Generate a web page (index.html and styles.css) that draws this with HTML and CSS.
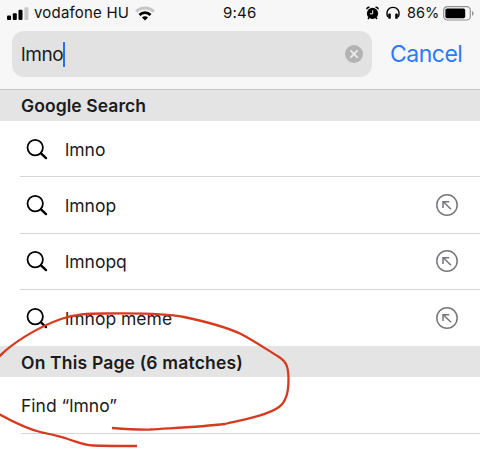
FILE: index.html
```html
<!DOCTYPE html>
<html lang="en">
<head>
  <meta charset="UTF-8">
  <title>Search</title>
  <link rel="stylesheet" href="styles.css">
</head>
<body>
  <svg class="defs" width="0" height="0">
    <symbol id="search" viewBox="0 0 24 24">
      <circle cx="10.2" cy="10.6" r="7.7" fill="none" stroke="#000" stroke-width="1.8"/>
      <path d="M16 16.400l5 4.700" stroke="#000" stroke-width="2.400" stroke-linecap="round"/>
    </symbol>
    <symbol id="fill" viewBox="0 0 24 24">
      <g fill="none" stroke="#77777a" stroke-width="1.500">
        <circle cx="12" cy="12" r="10.200"/>
        <path d="M16 16.200L8.300 8.800M8 15V8.700h6.300"/>
      </g>
    </symbol>
  </svg>

  <div class="phone">
    <header class="top">
      <div class="status">
        <svg class="signal" width="22" height="13">
          <rect x="0" y="8.6" width="4" height="4.4" rx="1"/>
          <rect x="5.8" y="6.3" width="4" height="6.7" rx="1"/>
          <rect x="11.5" y="2.8" width="4" height="10.2" rx="1"/>
          <rect x="17.4" y="0.2" width="4" height="12.8" rx="1" fill="#c8c8c8"/>
        </svg>
        <span class="carrier">vodafone HU</span>
        <svg class="wifi" width="20" height="15" viewBox="0 0 20 15">
          <path d="M1.2 5.6a12.4 12.4 0 0 1 17.6 0" fill="none" stroke="#c6c6c6" stroke-width="3"/>
          <path d="M4.5 8.9a7.8 7.8 0 0 1 11 0" fill="none" stroke="#000" stroke-width="2.8"/>
          <path d="M10 14.6l-3-3a4.2 4.2 0 0 1 6 0z"/>
        </svg>
        <span class="time">9:46</span>
        <svg class="alarm" width="13" height="14" viewBox="0 0 13 14">
          <circle cx="6.5" cy="7.4" r="5.6"/>
          <path d="M2 12.9l1.6-1.8M11 12.9l-1.6-1.8" stroke="#000" stroke-width="1.5"/>
          <path d="M.5 3.8A2.4 2.4 0 0 1 4.2 1zM12.5 3.8A2.4 2.4 0 0 0 8.8 1z"/>
          <path d="M6.7 4.4v3.4H3.8" fill="none" stroke="#f7f7f7" stroke-width="1"/>
        </svg>
        <svg class="headphones" width="14" height="14" viewBox="0 0 14 14">
          <path d="M1.8 11C-.6 5.3 2.5 1.4 7 1.4s7.6 3.9 5.2 9.600" fill="none" stroke="#000" stroke-width="1.4"/>
          <rect x="2.2" y="7.5" width="2.6" height="5.3" rx=".9"/>
          <rect x="9.2" y="7.5" width="2.6" height="5.3" rx=".9"/>
        </svg>
        <span class="percent">86%</span>
        <svg class="battery" width="31" height="15" viewBox="0 0 31 15">
          <rect x=".7" y=".7" width="26.6" height="13.3" rx="3.6" fill="none" stroke="#929292" stroke-width="1.2"/>
          <rect x="2.4" y="2.4" width="19.8" height="9.9" rx="1.7"/>
          <path d="M29 5a2.6 2.6 0 0 1 0 4.8z" fill="#929292"/>
        </svg>
      </div>
      <div class="bar">
        <div class="field">
          <span class="query">lmno</span><span class="caret"></span>
          <svg class="clear" width="18" height="18" viewBox="0 0 18 18">
            <circle cx="9" cy="9" r="9" fill="#b3b3b4"/>
            <path d="M5.4 5.4l7.2 7.2M12.6 5.4l-7.2 7.2" stroke="#eee" stroke-width="1.6"/>
          </svg>
        </div>
        <span class="cancel">Cancel</span>
      </div>
    </header>

    <h2 class="section"><span>Google Search</span></h2>
    <ul class="results">
      <li class="row"><svg class="glass"><use href="#search"/></svg><span class="word">lmno</span></li>
      <li class="row"><svg class="glass"><use href="#search"/></svg><span class="word">lmnop</span><svg class="arrow"><use href="#fill"/></svg></li>
      <li class="row"><svg class="glass"><use href="#search"/></svg><span class="word">lmnopq</span><svg class="arrow"><use href="#fill"/></svg></li>
      <li class="row last"><svg class="glass"><use href="#search"/></svg><span class="word">lmnop meme</span><svg class="arrow"><use href="#fill"/></svg></li>
    </ul>

    <h2 class="section page"><span>On This Page (6 matches)</span></h2>
    <ul class="results">
      <li class="row find"><span>Find “lmno”</span></li>
    </ul>

    <!-- hand-drawn loop around the page matches -->
    <svg class="marker" width="480" height="455" viewBox="0 0 480 455">
      <path d="M-3 359C10 344 38 327 61 319C75 314 88 313.500 105 313.500C135 313 164 313 184 317C203 321 226 327 241 334C256 342 266 349 279 357C287 362 288.500 368 288.500 380C288.500 393 286 402 279 407C268 415 246 419 225 424C200 427 172 428 150 429.500C138 430 125 429 112 428"/>
      <path d="M-3 413C13 422 31 430 42 432.500C52 434.500 60 436 68 439C80 443 84 445 93 445.500C106 446 120 446 137 446"/>
    </svg>
  </div>
</body>
</html>
```
FILE: styles.css
```css
* { box-sizing: border-box; }
body {
  margin: 0;
  background: #fff;
  color: #1b1b1d;
  font-family: Inter, "Liberation Sans", sans-serif;
}
.defs { position: absolute; }
.phone {
  position: relative;
  height: 455px;
  overflow: hidden;
}
.top {
  height: 90px;
  background: #f7f7f7;
  border-bottom: 1px solid #c4c4c4;
}

.status {
  display: flex;
  align-items: center;
  height: 26px;
  padding-left: 7px;
  color: #111;
  font-size: 14.5px;
  line-height: 26px;
  white-space: nowrap;
}
.status svg { flex: none; }
.signal { margin-right: 5px; }
.carrier {
  width: 95px;
  font-size: 15px;
  letter-spacing: 0.2px;
}
.wifi { margin-left: 6px; }
.time {
  width: 35px;
  margin-left: 68px;
  font-size: 15px;
  letter-spacing: 0.2px;
}
.alarm { margin-left: 108px; }
.headphones { margin-left: 7px; }
.percent { width: 33px; margin-left: 7px; }
.battery { margin-left: 3px; }

.bar {
  display: flex;
  align-items: center;
  padding: 5px 12px 0;
}
.field {
  display: flex;
  align-items: center;
  width: 360px;
  height: 46px;
  padding: 0 9px;
  background: #e2e2e3;
  border-radius: 12px;
}
.query { font-size: 19px; letter-spacing: -0.4px; }
.caret { width: 2px; height: 25px; background: #2d6cf0; }
.clear { margin-left: auto; }
.cancel {
  margin-left: 18px;
  color: #3078f6;
  font-size: 23px;
  letter-spacing: -0.5px;
}

.section {
  display: flex;
  align-items: center;
  height: 31px;
  margin: 0;
  padding-left: 21px;
  background: #e4e4e4;
  font-size: 17.5px;
  font-weight: 600;
  letter-spacing: 0.08px;
}
.page { padding-top: 1px; letter-spacing: 0.18px; }
.results {
  margin: 0;
  padding: 0;
  list-style: none;
}
.row {
  display: flex;
  align-items: center;
  height: 56.25px;
  margin-left: 20px;
  border-bottom: 1px solid #d6d6d8;
  font-size: 17.5px;
}
.last { border-bottom: none; }
.word { padding-top: 1px; }
.glass {
  width: 24px;
  height: 24px;
  margin: 0 16px 0 5px;
}
.arrow {
  width: 24px;
  height: 24px;
  margin: 0 21px 0 auto;
}
.find {
  height: 57px;
  margin-left: 21px;
  padding-top: 1px;
}

.marker {
  position: absolute;
  top: 0;
  left: 0;
}
.marker path {
  fill: none;
  stroke: #d63b20;
  stroke-width: 2.3;
  stroke-linejoin: round;
}
```
